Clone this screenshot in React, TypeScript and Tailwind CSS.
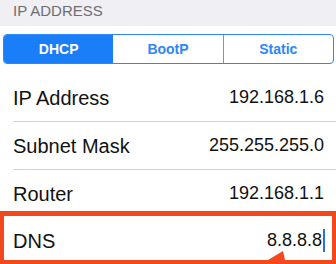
export default function App() {
  const rows = [
    { label: "IP Address", value: "192.168.1.6" },
    { label: "Subnet Mask", value: "255.255.255.0" },
    { label: "Router", value: "192.168.1.1" },
  ];

  return (
    <div
      className="w-[336px] h-[264px] overflow-hidden bg-white text-[#111]"
      style={{ fontFamily: '"Liberation Sans", Arial, sans-serif' }}
    >
      <div className="h-[26px] bg-[#efeff4] pl-[13px] pt-[2px] text-[15px] leading-[18px] text-[#6d6d72]">
        IP ADDRESS
      </div>

      <div className="pt-[8px] pl-[3px] pr-[2px]">
        <div className="flex h-[30px] rounded-[4px] border border-[#2f86f6] overflow-hidden text-[14px] font-bold">
          <div className="flex-1 flex items-center justify-center bg-[#1a7ef8] text-white">
            DHCP
          </div>
          <div className="flex-1 flex items-center justify-center text-[#2f86f6] border-r border-[#5b9cf2]">
            BootP
          </div>
          <div className="flex-1 flex items-center justify-center text-[#2f86f6]">
            Static
          </div>
        </div>
      </div>

      <div className="pt-[10px]">
        {rows.map((r, i) => (
          <div key={r.label}>
            {i > 0 && <div className="ml-[13px] h-px bg-[#d3d2d7]" />}
            <div className="flex h-[47px] items-center justify-between pl-[13px] pr-[12px]">
              <span className="text-[20px]">{r.label}</span>
              <span className="text-[18px]">{r.value}</span>
            </div>
          </div>
        ))}

        <div className="relative flex h-[47px] items-center justify-between pl-[13px] pr-[11px]">
          <span className="text-[20px]">DNS</span>
          <span className="flex items-center text-[18px]">
            8.8.8.8
            <span className="ml-px h-[23px] w-[2px] bg-[#2a6fe0]" />
          </span>

          <div className="absolute -top-[6px] left-0 right-0 -bottom-[2px] border-[5px] border-x-[4px] border-b-[6px] border-[#f2481c]">
            <svg
              className="absolute bottom-0 left-[264px]"
              width="17"
              height="9"
              viewBox="0 0 17 9"
            >
              <polygon points="0,9 15,0 17,9" fill="#f2481c" />
            </svg>
          </div>
        </div>
      </div>
    </div>
  );
}
